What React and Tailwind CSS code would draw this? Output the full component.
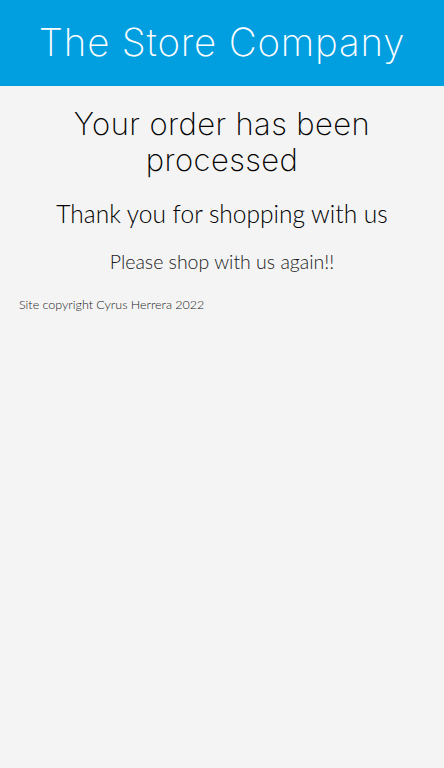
import React from 'react';

const App = () => {
    return (
        <div className="min-h-[768px] bg-[#f4f4f4] font-['Lato',sans-serif]">
            <header className="bg-[#019ee0] h-[86px] flex items-center justify-center">
                <h1 className="text-white text-[38.5px] font-extralight font-['Inter',sans-serif] tracking-[0.8px]">The Store Company</h1>
            </header>

            <main className="flex flex-col items-center text-center pt-[20px]">
                <h2 className="text-[31px] leading-[36px] font-extralight font-['Inter',sans-serif] text-black max-w-[340px] tracking-[0.4px]">
                    Your order has been processed
                </h2>
                <h3 className="text-[24.5px] font-light text-black mt-[18px]">Thank you for shopping with us</h3>
                <p className="text-[19.5px] font-light text-[#1a1a1a] mt-[14px]">Please shop with us again!!</p>
            </main>

            <footer className="px-[19px] pt-[20px] text-[12.5px] font-light text-[#222]">
                Site copyright Cyrus Herrera 2022
            </footer>
        </div>
    );
};

export default App;
